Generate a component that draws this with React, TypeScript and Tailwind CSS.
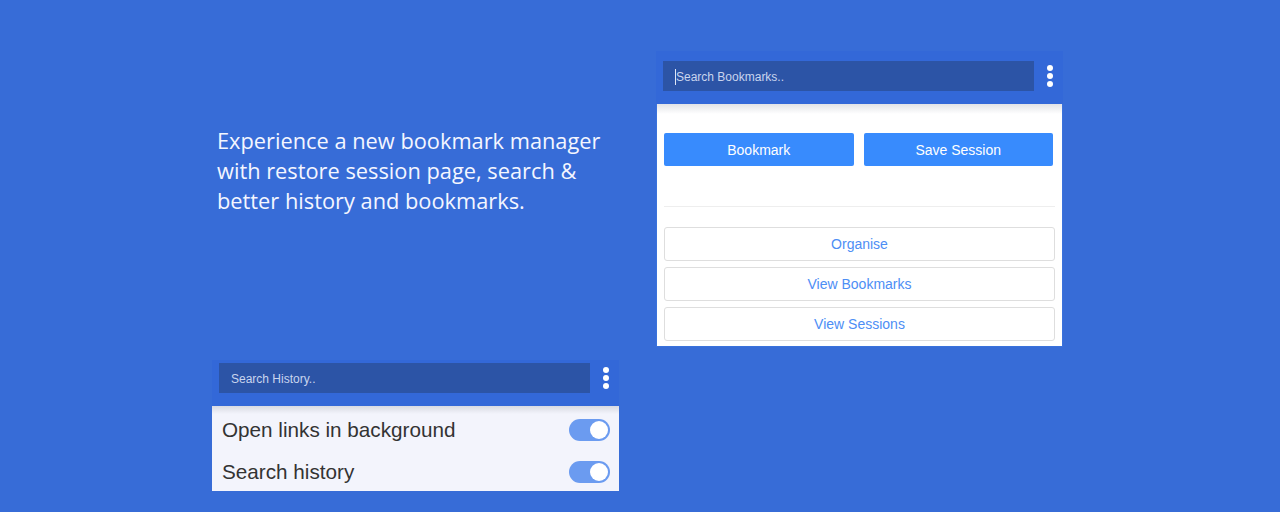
import React from "react";

function Dots() {
  return (
    <div className="flex flex-col items-center gap-[2px] w-[6px]">
      <span className="block w-[6px] h-[6px] rounded-full bg-white" />
      <span className="block w-[6px] h-[6px] rounded-full bg-white" />
      <span className="block w-[6px] h-[6px] rounded-full bg-white" />
    </div>
  );
}

function Toggle() {
  return (
    <div className="w-[41px] h-[22px] rounded-full bg-[#6b9bf0] flex items-center justify-end pr-[2px]">
      <span className="block w-[18px] h-[18px] rounded-full bg-white" />
    </div>
  );
}

export default function App() {
  const helv = { fontFamily: '"Liberation Sans", Arial, sans-serif' };
  return (
    <div className="w-[1280px] h-[512px] bg-[#376cd7] flex overflow-hidden">
      {/* left column */}
      <div className="ml-[212px] w-[407px] flex flex-col">
        <p
          className="mt-[126px] ml-[5px] text-[21.8px] leading-[30px] text-[#f4f6ff]"
          style={{ fontFamily: '"Open Sans", "Noto Sans", sans-serif' }}
        >
          Experience a new bookmark manager
          <br />
          with restore session page, search &amp;
          <br />
          better history and bookmarks.
        </p>
        <div className="mt-[144px] w-[407px] flex flex-col" style={helv}>
          <div className="h-[46px] bg-[#3368d8] flex pl-[7px] pr-[10px] pt-[3px] gap-[13px]">
            <div className="h-[30px] flex-1 bg-[#2c54a6] flex items-center pl-[12px] pt-[2px] text-[12px] text-[#c9d5ee]">
              Search History..
            </div>
            <div className="h-[30px] flex items-center">
              <Dots />
            </div>
          </div>
          <div className="h-[85px] bg-[#f3f4fc] relative pt-[2px]">
            <div className="absolute top-0 left-0 right-0 h-[8px] bg-gradient-to-b from-[#d8dae2] to-transparent" />
            <div className="h-[44px] flex items-center justify-between pl-[10px] pr-[9px]">
              <span className="text-[20.7px] text-[#333333]">Open links in background</span>
              <Toggle />
            </div>
            <div className="h-[39px] flex items-center justify-between pl-[10px] pr-[9px]">
              <span className="text-[20.7px] text-[#333333]">Search history</span>
              <Toggle />
            </div>
          </div>
        </div>
      </div>

      {/* right panel */}
      <div className="ml-[37px] mt-[51px] w-[407px] h-[296px] flex flex-col bg-[#3a72dc]" style={helv}>
        <div className="h-[53px] bg-[#3368d8] flex pl-[7px] pr-[10px] pt-[10px] gap-[13px]">
          <div className="h-[30px] flex-1 bg-[#2c54a6] flex items-center pl-[12px] pt-[2px] text-[12px] text-[#c9d5ee]">
            <span className="w-px h-[16px] bg-[#dfe6f5]" />
            Search Bookmarks..
          </div>
          <div className="h-[30px] flex items-center">
            <Dots />
          </div>
        </div>
        <div className="mx-[1px] h-[242px] bg-white relative flex flex-col px-[7px]">
          <div className="absolute top-0 left-0 right-0 h-[10px] bg-gradient-to-b from-[#e2e3e6] to-transparent" />
          <div className="mt-[29px] flex gap-[10px] pr-[2px]">
            <div className="flex-1 h-[33px] rounded-[2px] bg-[#388bfd] text-white text-[14px] pt-[1px] flex items-center justify-center">
              Bookmark
            </div>
            <div className="flex-1 h-[33px] rounded-[2px] bg-[#388bfd] text-white text-[14px] pt-[1px] flex items-center justify-center">
              Save Session
            </div>
          </div>
          <div className="mt-[40px] h-px bg-[#eeeeee]" />
          <div className="mt-[20px] flex flex-col gap-[6px]">
            {["Organise", "View Bookmarks", "View Sessions"].map((t) => (
              <div
                key={t}
                className="h-[34px] rounded-[3px] border border-[#dedede] bg-white text-[#4d8ef5] text-[14px] flex items-center justify-center"
              >
                {t}
              </div>
            ))}
          </div>
        </div>
      </div>
    </div>
  );
}
